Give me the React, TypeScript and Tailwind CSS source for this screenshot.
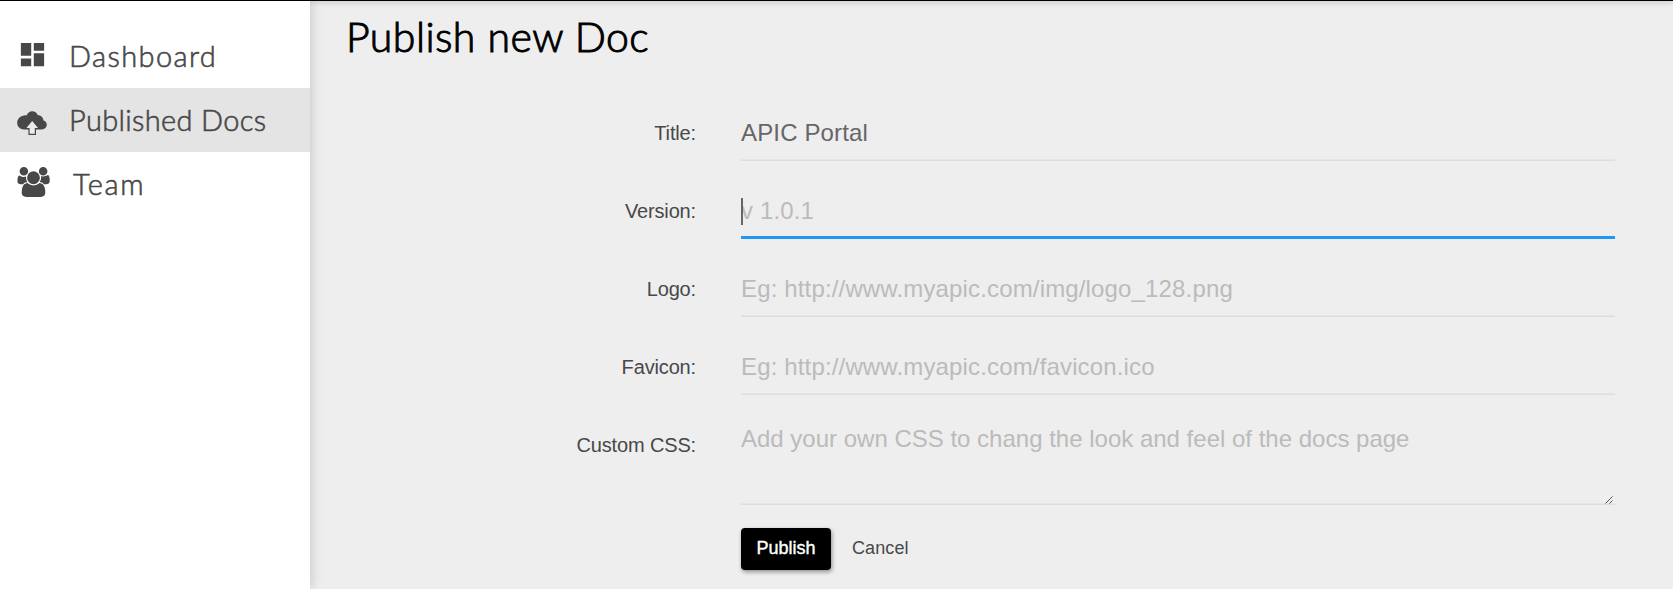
import React from "react";
import { MdDashboard } from "react-icons/md";

function CloudUploadIcon() {
  return (
    <svg viewBox="0 0 30 24" className="h-6 w-[30px] shrink-0" fill="none">
      <path
        d="M7 18.5C3 18.5.2 15.7.2 11.8.2 7.8 3.3 4.8 7.2 4.4 8.2 4.3 9 4.4 9.6 4.5 10.4 2 12.6.2 15.3.2c2.5 0 4.6 1.5 5.4 3.7 3.2.1 5.6 2.5 5.8 5.5 1.9.4 3.3 2 3.3 4.2 0 2.8-2.1 4.9-4.9 4.9z"
        fill="currentColor"
      />
      <path d="M11.4 16h7.6v8h-7.6z" fill="currentColor" />
      <path d="M15.2 10 21 17h-3.2v5.7h-5.2V17H9.4z" className="fill-[#ececec]" />
    </svg>
  );
}

function TeamIcon() {
  return (
    <svg viewBox="0 0 1920 1792" className="h-[30px] w-[33px] shrink-0" fill="currentColor" stroke="none">
      <path d="M593 896q-162 5-265 128h-134q-82 0-138-40.5t-56-118.5q0-353 124-353 6 0 43.5 21t97.5 42.5 119 21.5q67 0 133-23-5 37-5 66 0 159 92 287zm1071 637q0 120-73 189.5t-194 69.5h-874q-121 0-194-69.5t-73-189.5q0-53 3.5-103.5t14-109 26.5-108.5 43-97.5 62-81 85.5-53.5 111.5-20q10 0 43 21.5t73 48 107 48 135 21.5 135-21.5 107-48 73-48 43-21.5q61 0 111.5 20t85.5 53.5 62 81 43 97.5 26.5 108.5 14 109 3.5 103.5zm-1024-1277q0 106-75 181t-181 75-181-75-75-181 75-181 181-75 181 75 75 181zm704 384q0 159-112.5 271.5t-271.5 112.5-271.5-112.5-112.5-271.5 112.5-271.5 271.5-112.5 271.5 112.5 112.5 271.5zm576 225q0 78-56 118.5t-138 40.5h-134q-103-123-265-128 92-128 92-287 0-29-5-66 66 23 133 23 59 0 119-21.5t97.5-42.5 43.5-21q124 0 124 353zm-128-609q0 106-75 181t-181 75-181-75-75-181 75-181 181-75 181 75 75 181z" />
    </svg>
  );
}

function Sidebar() {
  return (
    <nav className="z-10 w-[310px] shrink-0 bg-white pt-[23px] font-['Lato',sans-serif] text-[29px] leading-[64px] font-light text-[#484848] shadow-[0_0_12px_rgba(0,0,0,0.2)] [-webkit-text-stroke:0.6px_#484848]">
      <a className="flex h-16 items-center pl-[17px]">
        <MdDashboard className="mb-[3px] size-[31px] shrink-0" />
        <span className="ml-[21px] tracking-[1.4px]">Dashboard</span>
      </a>
      <a className="flex h-16 items-center bg-[#e4e4e4] pl-[17px]">
        <span className="mt-[6px]">
          <CloudUploadIcon />
        </span>
        <span className="ml-[22px] tracking-[0.35px]">Published Docs</span>
      </a>
      <a className="flex h-16 items-center pl-[17px]">
        <span className="mb-[5px]">
          <TeamIcon />
        </span>
        <span className="ml-[23px] tracking-[1.6px]">Team</span>
      </a>
    </nav>
  );
}

const control =
  "block w-full bg-transparent text-2xl leading-7 text-[#666] caret-transparent outline-none placeholder:text-[#bbb] placeholder:opacity-100";
const singleLine = "h-[61px] pt-[5px] tracking-[0.15px]";
const idleLine = "shadow-[inset_0_-1px_0_#dddddd,inset_0_-2px_0_#e5e5e5]";

function Row({ label, children }: { label: string; children: React.ReactNode }) {
  return (
    <div className="flex h-[78px]">
      <label className="w-[386px] shrink-0 pt-[19px] text-right text-xl leading-7 tracking-[-0.15px] text-[#484848]">
        {label}
      </label>
      <div className="ml-[45px] w-[874px]">{children}</div>
    </div>
  );
}

export default function App() {
  return (
    <div className="flex h-[589px] flex-col overflow-hidden bg-[#eee] font-['Liberation_Sans',Arial,sans-serif]">
      <div className="z-0 h-px shrink-0 bg-black shadow-[0_1px_5px_rgba(0,0,0,0.5)]" />
      <div className="flex min-h-0 flex-1">
        <Sidebar />
        <main className="flex-1">
          <h1 className="pt-[11px] pl-9 font-['Lato',sans-serif] text-[41px] leading-[50px] font-light tracking-[0.45px] text-black [-webkit-text-stroke:1px_black]">
            Publish new Doc
          </h1>
          <form className="pt-[38px]">
            <Row label="Title:">
              <input className={`${control} ${singleLine} ${idleLine}`} defaultValue="APIC Portal" />
            </Row>
            <Row label="Version:">
              <div className="relative">
                <input
                  className={`${control} ${singleLine} shadow-[inset_0_-3px_0_#2196f3]`}
                  placeholder="v 1.0.1"
                />
                <span className="absolute top-5 left-0 h-[27px] w-0.5 bg-[#666]" />
              </div>
            </Row>
            <Row label="Logo:">
              <input
                className={`${control} ${singleLine} ${idleLine}`}
                placeholder="Eg: http://www.myapic.com/img/logo_128.png"
              />
            </Row>
            <Row label="Favicon:">
              <input
                className={`${control} ${singleLine} ${idleLine}`}
                placeholder="Eg: http://www.myapic.com/favicon.ico"
              />
            </Row>
            <Row label="Custom CSS:">
              <div className="relative">
                <textarea
                  className={`${control} ${idleLine} h-[93px] resize-none pt-[13px]`}
                  placeholder="Add your own CSS to chang the look and feel of the docs page"
                />
                <svg
                  viewBox="0 0 8 8"
                  className="absolute right-[2px] bottom-[1px] size-2"
                  stroke="#444"
                  strokeWidth="0.9"
                >
                  <path d="M.5 7.5l7-7M4.5 7.5l3-3" />
                </svg>
              </div>
            </Row>
            <div className="mt-[38px] ml-[431px] flex">
              <button
                type="button"
                className="h-[42px] w-[90px] rounded bg-black pb-[3px] text-lg text-white shadow-[1px_2px_4px_rgba(0,0,0,0.4)] [-webkit-text-stroke:0.4px_white]"
              >
                Publish
              </button>
              <button type="button" className="ml-[21px] h-[42px] pb-[3px] text-lg tracking-[0.1px] text-[#484848]">
                Cancel
              </button>
            </div>
          </form>
        </main>
      </div>
    </div>
  );
}
